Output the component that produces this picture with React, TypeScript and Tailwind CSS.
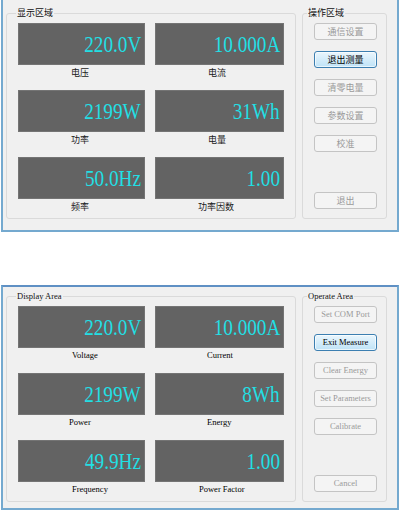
type Cell = { value: string; label: string; offset: number };
type Panel = {
  cn: boolean;
  displayTitle: string;
  operateTitle: string;
  rows: Cell[][];
  buttons: string[];
  active: number;
};

const panels: Panel[] = [
  {
    cn: true,
    displayTitle: "显示区域",
    operateTitle: "操作区域",
    rows: [
      [
        { value: "220.0V", label: "电压", offset: 53 },
        { value: "10.000A", label: "电流", offset: 53 },
      ],
      [
        { value: "2199W", label: "功率", offset: 53 },
        { value: "31Wh", label: "电量", offset: 53 },
      ],
      [
        { value: "50.0Hz", label: "频率", offset: 53 },
        { value: "1.00", label: "功率因数", offset: 43 },
      ],
    ],
    buttons: ["通信设置", "退出测量", "清零电量", "参数设置", "校准", "退出"],
    active: 1,
  },
  {
    cn: false,
    displayTitle: "Display Area",
    operateTitle: "Operate Area",
    rows: [
      [
        { value: "220.0V", label: "Voltage", offset: 54 },
        { value: "10.000A", label: "Current", offset: 52 },
      ],
      [
        { value: "2199W", label: "Power", offset: 51 },
        { value: "8Wh", label: "Energy", offset: 52 },
      ],
      [
        { value: "49.9Hz", label: "Frequency", offset: 54 },
        { value: "1.00", label: "Power Factor", offset: 44 },
      ],
    ],
    buttons: ["Set COM Port", "Exit Measure", "Clear Energy", "Set Parameters", "Calibrate", "Cancel"],
    active: 1,
  },
];

const cnFont = "font-['Noto_Sans_CJK_SC',sans-serif] text-[9px]";
const enFont = "font-['Liberation_Serif',serif] text-[8.5px]";

function Meter({ cell, width, cn }: { cell: Cell; width: string; cn: boolean }) {
  return (
    <div className={`flex flex-col ${width}`}>
      <div className="h-[42px] bg-[#636363] border border-[#747474] flex justify-end pr-[3px] pt-[8px]">
        <span className="font-['Liberation_Serif',serif] text-[24px] leading-none text-[#22dfe4] scale-x-[0.8] origin-right whitespace-nowrap">
          {cell.value}
        </span>
      </div>
      <div
        className={`mt-[1px] h-[13px] leading-[13px] whitespace-nowrap ${
          cn ? `${cnFont} text-[#1a1a1a]` : `${enFont} text-black font-medium`
        }`}
        style={{ paddingLeft: cell.offset }}
      >
        {cell.label}
      </div>
    </div>
  );
}

function Window({ panel, top }: { panel: Panel; top: boolean }) {
  const font = panel.cn ? cnFont : enFont;
  return (
    <div
      className={`ml-[1px] w-[398px] bg-[#f0f0f0] border-x-2 border-b-2 border-[#74a9cf] flex pl-[3px] ${
        top ? "pt-[7px] pb-[11px]" : "border-t-2 border-t-[#5f90c4] pt-[3px] pb-[6px]"
      }`}
    >
      <fieldset className="w-[290px] border border-[#dadada] rounded-[3px]">
        <legend className={`ml-[9px] px-[1px] h-[12px] leading-[12px] text-[#111] ${font}`}>
          {panel.displayTitle}
        </legend>
        <div className="flex flex-col gap-[11px] pt-[4px] pb-[5px] pl-[11px]">
          {panel.rows.map((row, i) => (
            <div key={i} className="flex gap-[10px]">
              <Meter cell={row[0]} width="w-[127px]" cn={panel.cn} />
              <Meter cell={row[1]} width="w-[129px]" cn={panel.cn} />
            </div>
          ))}
        </div>
      </fieldset>
      <fieldset className="ml-[6px] w-[85px] border border-[#dadada] rounded-[3px]">
        <legend className={`ml-[4px] px-[1px] h-[12px] leading-[12px] text-[#111] ${font}`}>
          {panel.operateTitle}
        </legend>
        <div className="flex flex-col gap-[11px] pt-[4px] pl-[11px]">
          {panel.buttons.map((b, i) => (
            <div
              key={b}
              className={`w-[63px] h-[17px] rounded-[3px] border flex items-center justify-center whitespace-nowrap ${font} ${
                i === 5 ? "mt-[29px]" : ""
              } ${
                i === panel.active
                  ? "border-[#3c7fb1] bg-gradient-to-b from-[#eaf6fd] to-[#bfe3f7] text-[#000] shadow-[inset_0_0_0_1px_#ffffffaa]"
                  : "border-[#c4c4c4] bg-[#f4f4f4] text-[#9a9a9a]"
              }`}
            >
              {b}
            </div>
          ))}
        </div>
      </fieldset>
    </div>
  );
}

export default function App() {
  return (
    <div className="w-[400px] h-[514px] bg-white flex flex-col">
      <Window panel={panels[0]} top />
      <div className="h-[53px]" />
      <Window panel={panels[1]} top={false} />
    </div>
  );
}
